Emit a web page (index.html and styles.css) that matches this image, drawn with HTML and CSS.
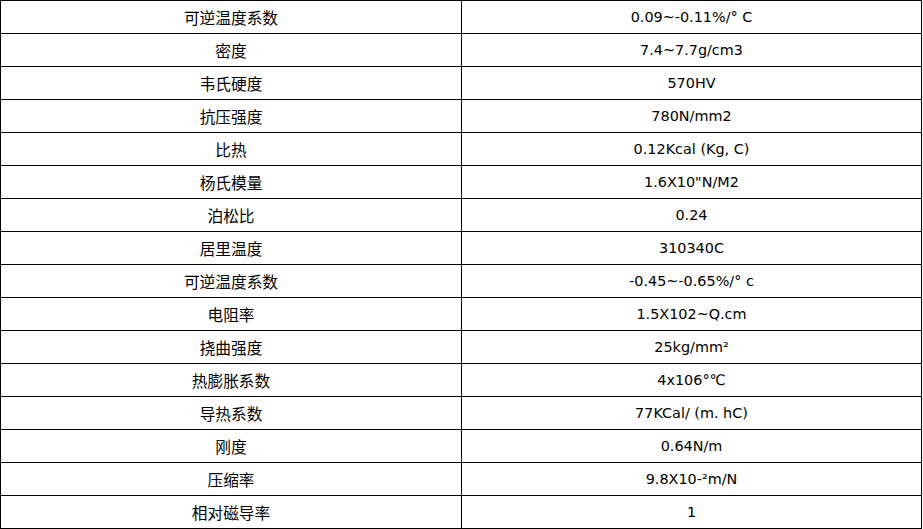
FILE: index.html
```html
<!DOCTYPE html>
<html lang="zh">
<head>
<meta charset="utf-8">
<link rel="stylesheet" href="styles.css">
</head>
<body>
<table class="spec">
<tbody>
<tr><td class="k">可逆温度系数</td><td class="v">0.09~-0.11%/° C</td></tr>
<tr><td class="k">密度</td><td class="v">7.4~7.7g/cm3</td></tr>
<tr><td class="k">韦氏硬度</td><td class="v">570HV</td></tr>
<tr><td class="k">抗压强度</td><td class="v">780N/mm2</td></tr>
<tr><td class="k">比热</td><td class="v">0.12Kcal (Kg, C)</td></tr>
<tr><td class="k">杨氏模量</td><td class="v">1.6X10"N/M2</td></tr>
<tr><td class="k">泊松比</td><td class="v">0.24</td></tr>
<tr><td class="k">居里温度</td><td class="v">310340C</td></tr>
<tr><td class="k">可逆温度系数</td><td class="v">-0.45~-0.65%/° c</td></tr>
<tr><td class="k">电阻率</td><td class="v">1.5X102~Q.cm</td></tr>
<tr><td class="k">挠曲强度</td><td class="v">25kg/mm²</td></tr>
<tr><td class="k">热膨胀系数</td><td class="v">4x106°℃</td></tr>
<tr><td class="k">导热系数</td><td class="v">77KCal/ (m. hC)</td></tr>
<tr><td class="k">刚度</td><td class="v">0.64N/m</td></tr>
<tr><td class="k">压缩率</td><td class="v">9.8X10-²m/N</td></tr>
<tr><td class="k">相对磁导率</td><td class="v">1</td></tr>
</tbody>
</table>
</body>
</html>
```
FILE: styles.css
```css
html, body {
  margin: 0;
  padding: 0;
  background: #fff;
}
.spec {
  border-collapse: collapse;
  width: 922px;
  table-layout: fixed;
  color: #000;
}
.spec td {
  border: 1px solid #000;
  height: 32px;
  padding: 0;
  text-align: center;
  vertical-align: middle;
  line-height: 16px;
}
.spec td.k {
  width: 460px;
  height: 31px;
  padding-top: 1px;
  font-family: "Noto Sans CJK SC", sans-serif;
  font-size: 15.7px;
}
.spec td.v {
  font-family: "DejaVu Sans", Verdana, "Noto Sans CJK SC", sans-serif;
  font-size: 14.4px;
}
```
